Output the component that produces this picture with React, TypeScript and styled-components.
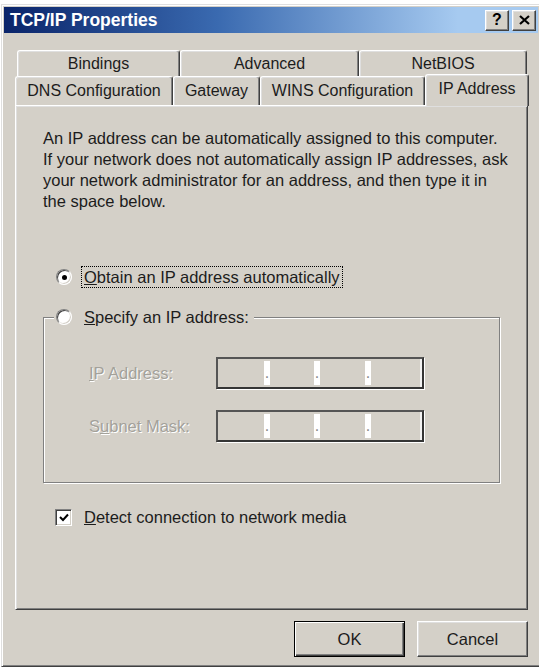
import styled, { createGlobalStyle, css } from 'styled-components';

const face = '#d4d0c8';

const GlobalStyle = createGlobalStyle`
  html, body {
    margin: 0;
    padding: 0;
    background: #fff;
    overflow: hidden;
  }
  body {
    font-family: "Liberation Sans", Arial, sans-serif;
    color: #1c1c1c;
  }
`;

const Window = styled.div`
  box-sizing: border-box;
  width: 540px;
  height: 663px;
  margin: 4px 0 0 1px;
  padding: 2px;
  background: ${face};
  border: 1px solid;
  border-color: #dfdfdf #404040 #404040 #dfdfdf;
  box-shadow: inset 1px 1px #fff, inset -1px -1px #808080;
  display: flex;
  flex-direction: column;
`;

const TitleBar = styled.div`
  flex: none;
  height: 26px;
  display: flex;
  align-items: center;
  justify-content: space-between;
  padding: 0 2px 0 6px;
  background: linear-gradient(90deg, #0a246a 0%, #3a6ab0 40%, #a6caf0 85%);
`;

const Title = styled.span`
  color: #fff;
  font-weight: bold;
  font-size: 17.5px;
`;

const Controls = styled.div`
  display: flex;
  gap: 3px;
`;

const CaptionButton = styled.button`
  box-sizing: border-box;
  width: 24px;
  height: 21px;
  padding: 0;
  background: ${face};
  border: 1px solid;
  border-color: #fff #404040 #404040 #fff;
  box-shadow: inset -1px -1px #808080, inset 1px 1px #dfdfdf;
  display: flex;
  align-items: center;
  justify-content: center;
  font-family: "Liberation Sans", Arial, sans-serif;
  font-weight: bold;
  font-size: 16px;
  color: #000;
`;

const Body = styled.div`
  flex: 1;
  display: flex;
  flex-direction: column;
  padding: 17px 10px 0 11px;
`;

const TabRow = styled.div<{ $indent?: number; $h: number }>`
  display: flex;
  align-items: flex-end;
  height: ${(p) => p.$h}px;
  padding-left: ${(p) => p.$indent ?? 0}px;
`;

const Tab = styled.div<{ $w: number; $active?: boolean }>`
  box-sizing: border-box;
  flex: none;
  width: ${(p) => p.$w}px;
  height: 100%;
  display: flex;
  align-items: center;
  justify-content: center;
  font-size: 16px;
  color: #1c1c1c;
  background: ${face};
  border-top: 1px solid #fff;
  border-left: 1px solid #fff;
  border-right: 1px solid #404040;
  border-radius: 3px 3px 0 0;
  box-shadow: inset -1px 0 #808080, inset 1px 1px #dfdfdf;

  ${(p) =>
    p.$active &&
    css`
      position: relative;
      z-index: 1;
      height: calc(100% + 3px);
      margin-bottom: -1px;
      padding-bottom: 4px;
    `}
`;

const Panel = styled.div`
  box-sizing: border-box;
  height: 505px;
  border: 1px solid;
  border-color: #fff #404040 #404040 #fff;
  box-shadow: inset 1px 1px #dfdfdf, inset -1px -1px #808080;
  padding: 22px 20px 0 27px;
`;

const Intro = styled.p`
  margin: 0;
  font-size: 16.5px;
  line-height: 21px;
  white-space: nowrap;
`;

const OptionRow = styled.div<{ $top?: number; $indent?: number }>`
  display: flex;
  align-items: center;
  gap: 9px;
  height: 22px;
  margin-top: ${(p) => p.$top ?? 0}px;
  margin-left: ${(p) => p.$indent ?? 0}px;
  font-size: 16.5px;
`;

const Radio = styled.span<{ $checked?: boolean }>`
  box-sizing: border-box;
  flex: none;
  width: 16px;
  height: 16px;
  border-radius: 50%;
  background: #fff;
  border: 1px solid;
  border-color: #808080 #fff #fff #808080;
  box-shadow: inset 1px 1px #404040, inset -1px -1px #d4d0c8;
  display: flex;
  align-items: center;
  justify-content: center;

  &::after {
    content: '';
    width: 5px;
    height: 5px;
    border-radius: 50%;
    background: #000;
    display: ${(p) => (p.$checked ? 'block' : 'none')};
  }
`;

const Checkbox = styled.span`
  box-sizing: border-box;
  flex: none;
  width: 17px;
  height: 17px;
  background: #fff;
  border: 1px solid;
  border-color: #808080 #fff #fff #808080;
  box-shadow: inset 1px 1px #404040, inset -1px -1px #d4d0c8;
  display: flex;
  align-items: center;
  justify-content: center;
`;

const OptionLabel = styled.span<{ $focused?: boolean }>`
  padding: 0 2px;
  line-height: 20px;
  border: 1px solid transparent;
  ${(p) =>
    p.$focused &&
    css`
      border: 1px dotted #000;
    `}
`;

const Group = styled.fieldset`
  box-sizing: border-box;
  width: 457px;
  min-width: 0;
  margin: 18px 0 0;
  padding: 29px 0 40px 0;
  border: 1px solid #808080;
  box-shadow: inset 1px 1px #fff, 1px 1px #fff;
`;

const GroupLegend = styled.legend`
  display: flex;
  align-items: center;
  gap: 9px;
  height: 22px;
  margin-left: 10px;
  padding: 0 2px;
  background: ${face};
  font-size: 16.5px;
`;

const FieldRow = styled.div<{ $top?: number }>`
  display: flex;
  align-items: center;
  padding-left: 45px;
  margin-top: ${(p) => p.$top ?? 0}px;
`;

const DisabledLabel = styled.span`
  width: 127px;
  font-size: 16.5px;
  color: #a3a19a;
  text-shadow: 1px 1px #fff;
`;

const IpField = styled.div`
  box-sizing: border-box;
  width: 208px;
  height: 32px;
  padding: 2px 0;
  border: 2px solid;
  border-color: #555 #353535 #353535 #555;
  box-shadow: 1px 1px #fff, inset -2px 0 #f2f2f2;
  display: grid;
  grid-template-columns: 46px 6px 44px 6px 45px 6px 1fr;
`;

const Octet = styled.span``;

const Dot = styled.span`
  background: #fff;
  display: flex;
  justify-content: center;
  font-size: 16px;
  line-height: 24px;
  color: #8a8a8a;
`;

const ButtonRow = styled.div`
  display: flex;
  justify-content: flex-end;
  gap: 12px;
  margin-top: 11px;
`;

const Button = styled.button<{ $default?: boolean }>`
  box-sizing: border-box;
  width: 111px;
  height: 36px;
  background: ${face};
  font-family: "Liberation Sans", Arial, sans-serif;
  font-size: 16.5px;
  color: #1c1c1c;
  border: 1px solid;
  border-color: #fff #404040 #404040 #fff;
  box-shadow: inset -1px -1px #808080, inset 1px 1px #dfdfdf;

  ${(p) =>
    p.$default &&
    css`
      border: 1px solid #000;
      box-shadow: inset 1px 1px #fff, inset -1px -1px #404040, inset -2px -2px #808080;
    `}
`;

function IpBox() {
  return (
    <IpField>
      <Octet />
      <Dot>.</Dot>
      <Octet />
      <Dot>.</Dot>
      <Octet />
      <Dot>.</Dot>
      <Octet />
    </IpField>
  );
}

export default function App() {
  return (
    <>
      <GlobalStyle />
      <Window>
        <TitleBar>
          <Title>TCP/IP Properties</Title>
          <Controls>
            <CaptionButton>?</CaptionButton>
            <CaptionButton>
              <svg width="11" height="10" viewBox="0 0 11 10">
                <path d="M1 1 L10 9 M10 1 L1 9" stroke="#000" strokeWidth="2.2" />
              </svg>
            </CaptionButton>
          </Controls>
        </TitleBar>

        <Body>
          <TabRow $h={26} $indent={2}>
            <Tab $w={163}>Bindings</Tab>
            <Tab $w={179}>Advanced</Tab>
            <Tab $w={168}>NetBIOS</Tab>
          </TabRow>
          <TabRow $h={29}>
            <Tab $w={158}>DNS Configuration</Tab>
            <Tab $w={87}>Gateway</Tab>
            <Tab $w={165}>WINS Configuration</Tab>
            <Tab $w={104} $active>
              IP Address
            </Tab>
          </TabRow>

          <Panel>
            <Intro>
              An IP address can be automatically assigned to this computer.
              <br />
              If your network does not automatically assign IP addresses, ask
              <br />
              your network administrator for an address, and then type it in
              <br />
              the space below.
            </Intro>

            <OptionRow $top={54} $indent={13}>
              <Radio $checked />
              <OptionLabel $focused>
                <u>O</u>btain an IP address automatically
              </OptionLabel>
            </OptionRow>

            <Group>
              <GroupLegend>
                <Radio />
                <OptionLabel>
                  <u>S</u>pecify an IP address:
                </OptionLabel>
              </GroupLegend>
              <FieldRow>
                <DisabledLabel>
                  <u>I</u>P Address:
                </DisabledLabel>
                <IpBox />
              </FieldRow>
              <FieldRow $top={21}>
                <DisabledLabel>
                  S<u>u</u>bnet Mask:
                </DisabledLabel>
                <IpBox />
              </FieldRow>
            </Group>

            <OptionRow $top={23} $indent={12}>
              <Checkbox>
                <svg width="10" height="9" viewBox="0 0 10 9">
                  <path d="M1 4 L4 7 L9 1.5" fill="none" stroke="#000" strokeWidth="2" />
                </svg>
              </Checkbox>
              <OptionLabel>
                <u>D</u>etect connection to network media
              </OptionLabel>
            </OptionRow>
          </Panel>

          <ButtonRow>
            <Button $default>OK</Button>
            <Button>Cancel</Button>
          </ButtonRow>
        </Body>
      </Window>
    </>
  );
}
